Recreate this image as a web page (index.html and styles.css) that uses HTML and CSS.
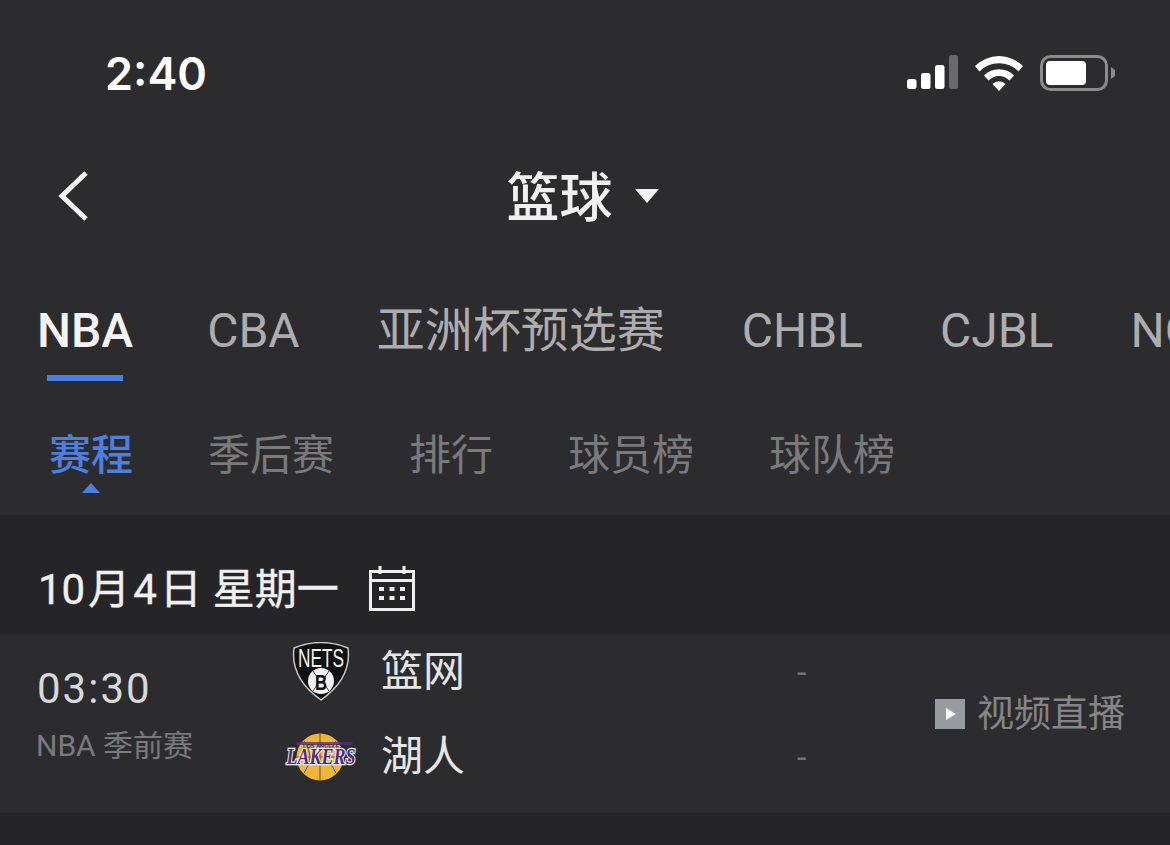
FILE: index.html
```html
<!DOCTYPE html>
<html lang="zh">
<head>
<meta charset="utf-8">
<title>篮球</title>
<link rel="stylesheet" href="styles.css">
</head>
<body>
<div class="page">
  <header class="top">
    <div class="status">
      <span class="clock">2:40</span>
      <div class="status-icons">
        <svg class="signal" width="51" height="36" viewBox="0 0 51 36">
          <rect x="0" y="24" width="9.500" height="10" rx="2.500" fill="#fff"/>
          <rect x="14" y="18" width="9.500" height="16" rx="2.500" fill="#fff"/>
          <rect x="28" y="10" width="9.500" height="24" rx="2.500" fill="#fff"/>
          <rect x="42" y="0" width="9" height="34" rx="2.500" fill="#6a6a6c"/>
        </svg>
        <svg class="wifi" width="48" height="36" viewBox="0 0 48 36">
          <path d="M0 11 A34 34 0 0 1 48 11 L43.500 16.500 A27 27 0 0 0 4.500 16.500 Z" fill="#fff"/>
          <path d="M9 20.500 A21 21 0 0 1 39 20.500 L34.500 25.500 A14.500 14.500 0 0 0 13.500 25.500 Z" fill="#fff"/>
          <path d="M17.500 29 A9 9 0 0 1 30.500 29 L24 36 Z" fill="#fff"/>
        </svg>
        <svg class="battery" width="75" height="36" viewBox="0 0 75 36">
          <rect x="1.500" y="1.500" width="65" height="33" rx="9" fill="none" stroke="#8b8b8d" stroke-width="3"/>
          <rect x="6" y="6" width="40" height="24" rx="4" fill="#fff"/>
          <path d="M71 12 L75 15 V21 L71 24 Z" fill="#8b8b8d"/>
        </svg>
      </div>
    </div>
    <div class="nav">
      <svg class="back" width="32" height="52" viewBox="0 0 32 52">
        <path d="M29 3 L5 26 L29 49" fill="none" stroke="#f2f2f2" stroke-width="5"/>
      </svg>
      <div class="title"><span>篮球</span><i class="caret"></i></div>
    </div>
    <nav class="tabs">
      <a class="tab active">NBA</a>
      <a class="tab">CBA</a>
      <a class="tab">亚洲杯预选赛</a>
      <a class="tab">CHBL</a>
      <a class="tab">CJBL</a>
      <a class="tab">NCAA</a>
    </nav>
    <nav class="subtabs">
      <a class="sub active">赛程</a>
      <a class="sub">季后赛</a>
      <a class="sub">排行</a>
      <a class="sub">球员榜</a>
      <a class="sub">球队榜</a>
    </nav>
  </header>
  <section class="date">
    <span class="date-text"><span>10</span><span>月</span><span>4</span><span>日</span><span class="week">星期一</span></span>
    <svg class="cal" width="46" height="45" viewBox="0 0 46 45">
      <path d="M1.500 5.500 H44.500 V43.500 H1.500 Z M1.500 14.500 H44.500" fill="none" stroke="#efefef" stroke-width="3"/>
      <path d="M11 0 V8 M35 0 V8" stroke="#efefef" stroke-width="3"/>
      <path d="M10 21 h5 v4 h-5 z M20.500 21 h5 v4 h-5 z M31 21 h5 v4 h-5 z M10 30 h5 v4 h-5 z M20.500 30 h5 v4 h-5 z M31 30 h5 v4 h-5 z" fill="#efefef"/>
    </svg>
  </section>
  <section class="match">
    <div class="when">
      <div class="time">03:30</div>
      <div class="league">NBA 季前赛</div>
    </div>
    <div class="teams">
      <div class="team">
        <span class="logo">
          <svg width="60" height="60" viewBox="0 0 60 60">
            <path d="M3 6 Q30 -5 57 6 Q61 36 30 58 Q-1 36 3 6 Z" fill="#111" stroke="#c8c8c8" stroke-width="1.500"/>
            <text x="30" y="25" class="nets-word" textLength="46" lengthAdjust="spacingAndGlyphs">NETS</text>
            <circle cx="30" cy="39" r="13" fill="#f1f1f1"/>
            <path d="M22 29 Q31 39 22 49 M38 29 Q29 39 38 49" fill="none" stroke="#444" stroke-width="1"/>
            <text x="30" y="48" class="nets-b" textLength="12" lengthAdjust="spacingAndGlyphs">B</text>
          </svg>
        </span>
        <span class="name">篮网</span>
        <span class="score">-</span>
      </div>
      <div class="team">
        <span class="logo">
          <svg width="72" height="50" viewBox="0 0 72 50">
            <circle cx="35" cy="25" r="23.500" fill="#efb63e"/>
            <path d="M35 2 V48 M12 25 H58 M19 9 Q31 25 19 41 M51 9 Q39 25 51 41" fill="none" stroke="#7a5310" stroke-width="1"/>
            <path d="M12 10 H68 L66 13 H11 Z" fill="#5a2d86" opacity="0.8"/>
            <text x="38" y="16" class="la-word" textLength="40" lengthAdjust="spacingAndGlyphs">LOS ANGELES</text>
            <text x="36" y="32" class="lakers-word" textLength="69" lengthAdjust="spacingAndGlyphs">LAKERS</text>
          </svg>
        </span>
        <span class="name">湖人</span>
        <span class="score">-</span>
      </div>
    </div>
    <div class="live">
      <span class="play"><i></i></span>
      <span>视频直播</span>
    </div>
  </section>
</div>
</body>
</html>
```

FILE: styles.css
```css
* { box-sizing: border-box; }
html, body { margin: 0; padding: 0; }
body {
  width: 1170px;
  height: 845px;
  overflow: hidden;
  background: #252527;
  font-family: "Roboto", "Noto Sans CJK SC", sans-serif;
}
.page { width: 1170px; height: 845px; overflow: hidden; }
.top { background: #2c2c2e; height: 515px; }

.status {
  height: 148px;
  padding: 44px 55px 0 105px;
  display: flex;
  justify-content: space-between;
  align-items: flex-start;
}
.clock {
  font-family: "Inter", sans-serif;
  font-weight: 600;
  font-size: 45px;
  line-height: 60px;
  color: #fff;
}
.status-icons { display: flex; align-items: center; gap: 17px; padding-top: 11px; }

.nav { height: 94px; position: relative; display: flex; justify-content: center; align-items: center; }
.back { position: absolute; left: 57px; top: 22px; }
.title {
  display: flex;
  align-items: center;
  gap: 22px;
  margin-left: -5px;
  margin-bottom: 2px;
  color: #f0f0f0;
  font-size: 53px;
  font-weight: 500;
  font-family: "Noto Sans CJK SC", sans-serif;
  line-height: 94px;
}
.caret {
  width: 0; height: 0;
  margin-top: 4px;
  border-left: 12px solid transparent;
  border-right: 12px solid transparent;
  border-top: 14px solid #f0f0f0;
}

.tabs {
  height: 153px;
  padding: 0 0 0 37px;
  display: flex;
  gap: 77px;
  white-space: nowrap;
  overflow: hidden;
}
.tab {
  position: relative;
  display: block;
  padding-top: 59px;
  font-size: 48px;
  line-height: 60px;
  color: #adadaf;
  flex: none;
}
.tab.active { color: #f4f4f4; font-weight: 500; margin-right: -3px; }
.tab.active::after {
  content: "";
  position: absolute;
  left: 10px; right: 10px;
  top: 133px;
  height: 6px;
  background: #4d7fe0;
}

.subtabs {
  height: 120px;
  padding: 31px 0 0 49px;
  display: flex;
  gap: 75px;
  white-space: nowrap;
}
.sub {
  position: relative;
  font-size: 42px;
  line-height: 60px;
  color: #7a7a7c;
  height: 60px;
}
.sub.active { color: #4d7fe0; font-weight: 500; }
.sub.active::after {
  content: "";
  position: absolute;
  left: 33px;
  top: 57px;
  border-left: 9px solid transparent;
  border-right: 9px solid transparent;
  border-bottom: 10px solid #4d7fe0;
}

.date {
  height: 119px;
  padding: 27px 0 0 38px;
  display: flex;
  align-items: center;
  gap: 30px;
  color: #f0f0f0;
  font-size: 42px;
  font-weight: 400;
  -webkit-text-stroke: 0.4px #f0f0f0;
}
.date-text { display: flex; gap: 3px; line-height: 60px; margin-top: 4px; }
.week { margin-left: 8px; }

.match {
  height: 179px;
  background: #2c2c2e;
  display: flex;
  position: relative;
}
.when { width: 248px; padding: 29px 0 0 37px; flex: none; }
.time { font-size: 42px; line-height: 52px; color: #d8d8da; letter-spacing: 2px; }
.league { font-size: 30px; line-height: 40px; margin-top: 11px; margin-left: -1px; color: #7a7a7c; }

.teams { flex: none; width: 565px; }
.team { display: flex; align-items: center; height: 94px; }
.team:first-child { height: 76px; }
.logo { display: flex; justify-content: center; flex: none; margin-left: 12px; width: 122px; }
.name { font-size: 42px; color: #e6e6e8; width: 416px; flex: none; line-height: 60px; margin-left: -1px; }
.score { color: #747476; font-size: 34px; }

.nets-word { font-family: "Liberation Sans", sans-serif; font-size: 26px; fill: #f4f4f4; text-anchor: middle; }
.nets-b { font-family: "Liberation Sans", sans-serif; font-size: 22px; font-weight: 700; fill: #111; text-anchor: middle; }
.la-word { font-family: "Liberation Sans", sans-serif; font-weight: 700; font-size: 5px; fill: #2f1c55; text-anchor: middle; }
.lakers-word {
  font-family: "Liberation Serif", serif;
  font-style: italic;
  font-weight: 700;
  font-size: 24px;
  fill: #4e2a84;
  stroke: #f0f0f0;
  stroke-width: 2.500px;
  paint-order: stroke;
  text-anchor: middle;
}

.live {
  position: absolute;
  left: 935px;
  top: 51px;
  display: flex;
  align-items: center;
  gap: 12px;
  font-size: 37px;
  line-height: 60px;
  color: #858587;
}
.play { width: 30px; height: 30px; margin-bottom: 2px; background: #989ba1; display: flex; align-items: center; justify-content: center; }
.play i {
  width: 0; height: 0;
  margin-left: 2px;
  border-top: 6px solid transparent;
  border-bottom: 6px solid transparent;
  border-left: 10px solid #fff;
}
```
